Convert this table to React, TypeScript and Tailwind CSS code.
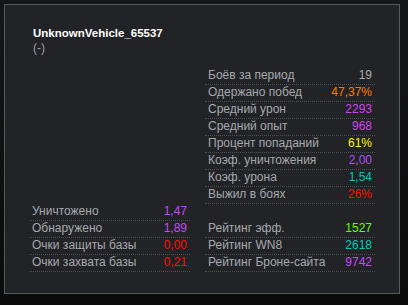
import React from "react";

type Row = { label: string; value: string; color: string } | null;

const left: Row[] = [
  { label: "Уничтожено", value: "1,47", color: "text-[#c44cf6]" },
  { label: "Обнаружено", value: "1,89", color: "text-[#c44cf6]" },
  { label: "Очки защиты базы", value: "0,00", color: "text-[#fe0e00]" },
  { label: "Очки захвата базы", value: "0,21", color: "text-[#fe0e00]" },
];

const right: Row[] = [
  { label: "Боёв за период", value: "19", color: "text-[#a9abad]" },
  { label: "Одержано побед", value: "47,37%", color: "text-[#fe7903]" },
  { label: "Средний урон", value: "2293", color: "text-[#d042f3]" },
  { label: "Средний опыт", value: "968", color: "text-[#d042f3]" },
  { label: "Процент попаданий", value: "61%", color: "text-[#f8f400]" },
  { label: "Коэф. уничтожения", value: "2,00", color: "text-[#b04cfa]" },
  { label: "Коэф. урона", value: "1,54", color: "text-[#02c9b3]" },
  { label: "Выжил в боях", value: "26%", color: "text-[#fe0e00]" },
  null,
  { label: "Рейтинг эфф.", value: "1527", color: "text-[#60ff00]" },
  { label: "Рейтинг WN8", value: "2618", color: "text-[#02c9b3]" },
  { label: "Рейтинг Броне-сайта", value: "9742", color: "text-[#c44cf6]" },
];

function StatRow({ row }: { row: Row }) {
  if (!row) return <div className="h-[17px]" />;
  return (
    <div className="h-[17px] flex justify-between items-end pl-[3px] pr-[3px] pb-[1px] border-b border-dotted border-[#4e4f51] leading-[15px]">
      <span className="text-[#a5a9ad]">{row.label}</span>
      <span className={row.color}>{row.value}</span>
    </div>
  );
}

export default function App() {
  return (
    <div className="w-[408px] h-[305px] bg-[linear-gradient(to_bottom,#151617,#0b0b0c)] pt-[4px] pl-[4px] font-['Liberation_Sans',Arial,sans-serif] text-[12px]">
      <div className="w-[396px] h-[290px] border border-[#58595a] bg-[#222326] flex flex-col">
        <div className="pl-[28px] pt-[21px]">
          <div className="text-white font-bold text-[11.5px] leading-[15px]">UnknownVehicle_65537</div>
          <div className="text-[#9a9ea3] leading-[15px]">(-)</div>
        </div>
        <div className="flex items-end gap-[15px] pl-[24px] mt-auto pb-[21px]">
          <div className="w-[161px]">
            {left.map((r, i) => (
              <StatRow key={i} row={r} />
            ))}
          </div>
          <div className="w-[170px]">
            {right.map((r, i) => (
              <StatRow key={i} row={r} />
            ))}
          </div>
        </div>
      </div>
    </div>
  );
}
